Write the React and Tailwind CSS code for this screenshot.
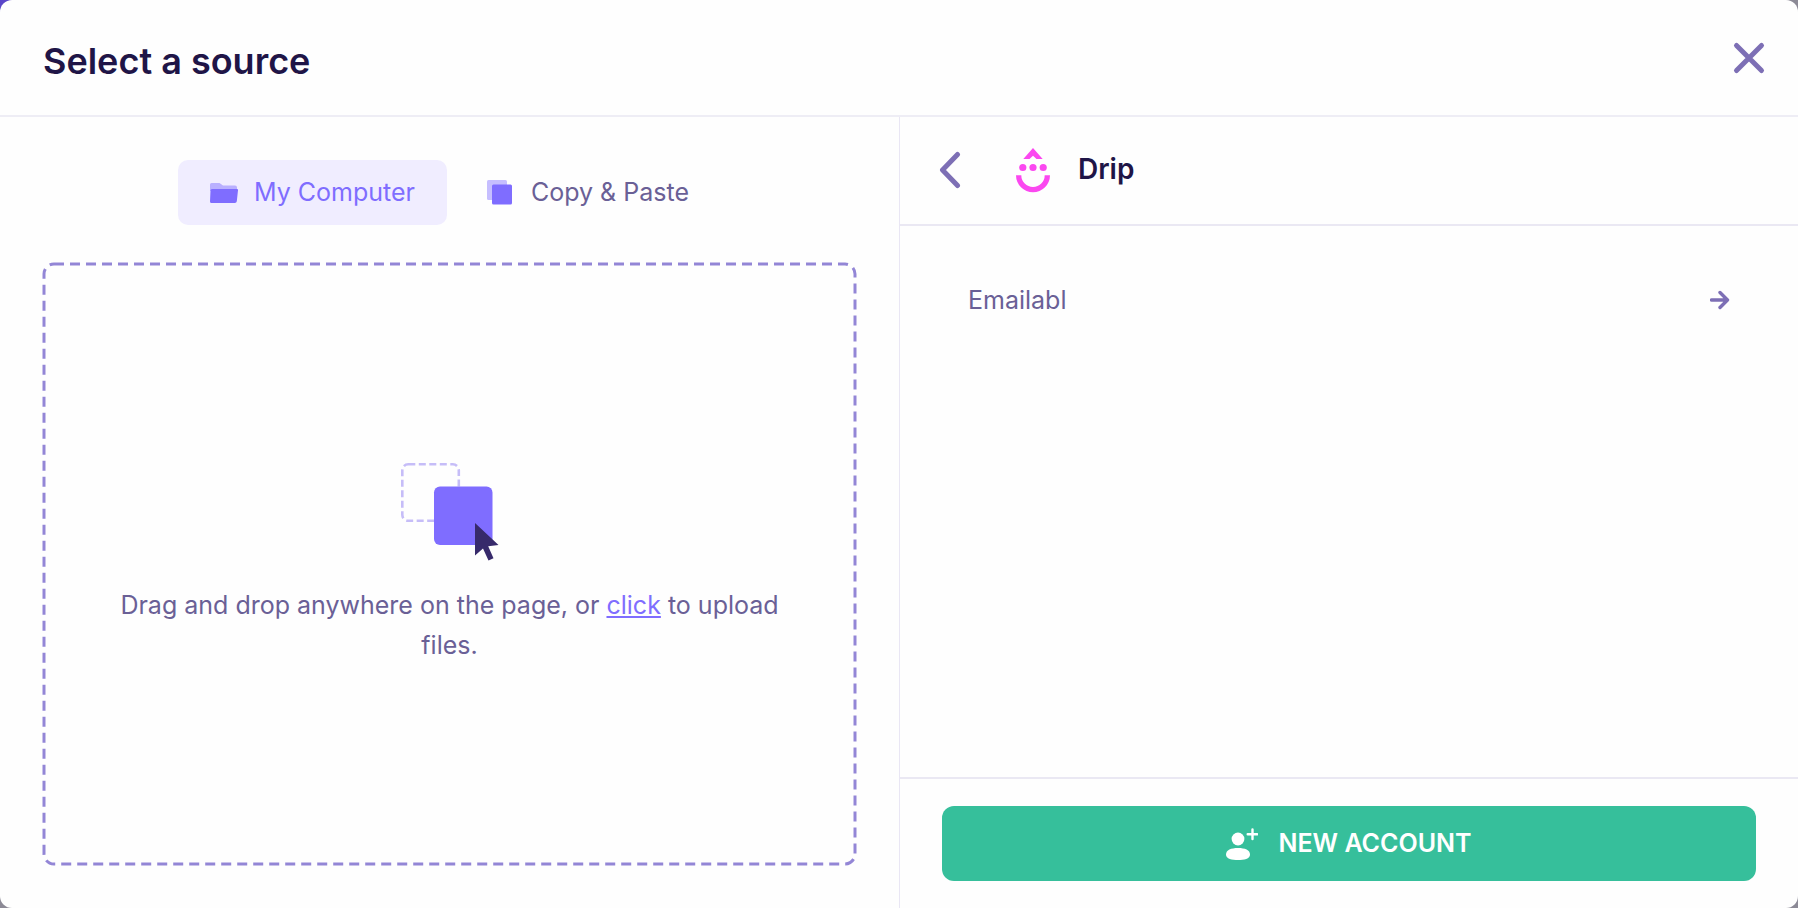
import React, { useState } from 'react';

const FolderIcon = () => (
  <svg className="w-7 h-5" viewBox="0 0 28 20" aria-hidden="true">
    <path d="M0 1.500A1.500 1.500 0 0 1 1.500 0h8l3.500 2.500h12a2 2 0 0 1 2 2V8H0z" fill="#b9b0ff" />
    <path d="M2 6H27a1 1 0 0 1 1 1.200l-1.200 11a2 2 0 0 1-2 1.800H1.500A1.500 1.500 0 0 1 0 18.500L.5 7.500A1.500 1.500 0 0 1 2 6z" fill="#7f6dff" />
  </svg>
);

const CopyIcon = () => (
  <svg className="w-7 h-[26px]" viewBox="0 0 28 26" aria-hidden="true">
    <rect width="20" height="20" rx="1.500" fill="#c6beff" />
    <rect x="5" y="4.500" width="20" height="20" rx="1.500" fill="#7f6dff" />
  </svg>
);

const DragIcon = () => (
  <svg className="w-[98px] h-[98px]" viewBox="0 0 98 98" aria-hidden="true">
    <rect x="1.300" y="1.300" width="56.500" height="56.500" rx="6" fill="none" stroke="#c6bdf8" strokeWidth="2.600" strokeDasharray="7 3.500" />
    <rect x="33" y="23.500" width="58.500" height="58.500" rx="6" fill="#7f6dff" />
    <path d="M74 60v32.500l8-7 5.500 12 5-2.200-5.300-12L97.500 82z" fill="#372a6b" />
  </svg>
);

const DripLogo = () => (
  <svg className="w-[34px] h-[45px]" viewBox="0 0 34 45" aria-hidden="true" fill="#fb48f0">
    <path d="M17 0l9.700 11h-6.200L17 7.800 13.500 11H7.300z" />
    <circle cx="6.800" cy="19.500" r="3.600" />
    <circle cx="17" cy="19.500" r="3.600" />
    <circle cx="27.200" cy="19.500" r="3.600" />
    <path d="M0 27.300h5.300a11.700 11.700 0 0 0 23.400 0H34a17 17 0 0 1-34 0z" />
  </svg>
);

const AddUserIcon = () => (
  <svg className="w-8 h-8" viewBox="0 0 32 32" aria-hidden="true" fill="#fff">
    <circle cx="12" cy="11" r="6.400" />
    <path d="M0 26.500C0 22 5 20 12 20s12 2 12 6.500S18 32 12 32 0 31 0 26.500z" />
    <path d="M26.500 1.500v9.500M21.700 6.200h9.500" stroke="#fff" strokeWidth="2.400" strokeLinecap="round" />
  </svg>
);

const tabs = [
  { id: 'computer', label: 'My Computer', icon: FolderIcon },
  { id: 'paste', label: 'Copy & Paste', icon: CopyIcon },
];

const accounts = ['Emailabl'];

const App = () => {
  const [activeTab, setActiveTab] = useState('computer');

  return (
    <div className="min-h-screen flex bg-linear-to-br from-[#5a45c9] via-[#8c8a96] via-20% to-[#8c8a96] font-['Inter',sans-serif] text-[25px] text-[#6a6096]">
      <div className="flex-1 flex flex-col bg-[#fefefe] rounded-xl overflow-hidden">
        <header className="flex items-center justify-between pl-[43px] pr-8 h-[117px] border-b-2 border-[#eeedf5]">
          <h1 className="text-[36px] leading-[44px] font-semibold text-[#1f1547] pt-1.5">Select a source</h1>
          <button type="button" aria-label="Close">
            <svg className="w-[34px] h-[34px]" viewBox="0 0 34 34" aria-hidden="true">
              <path d="M4.500 4.500l25 25M29.500 4.500l-25 25" stroke="#7d6fb5" strokeWidth="5" strokeLinecap="round" />
            </svg>
          </button>
        </header>

        <main className="flex-1 grid grid-cols-2">
          <section className="flex flex-col px-11 pt-[43px] pb-11">
            <div className="flex justify-center gap-2">
              {tabs.map(({ id, label, icon: Icon }) => (
                <button
                  key={id}
                  type="button"
                  onClick={() => setActiveTab(id)}
                  className={`flex items-center gap-4 h-[65px] px-8 rounded-[10px] ${
                    activeTab === id ? 'bg-[#f0edff] text-[#7f6dff]' : 'text-[#6a6096]'
                  }`}
                >
                  <Icon />
                  {label}
                </button>
              ))}
            </div>

            <div className="relative flex-1 mt-[39px] flex flex-col items-center justify-center px-16">
              <svg className="absolute inset-0 w-full h-full overflow-visible pointer-events-none" aria-hidden="true">
                <rect width="100%" height="100%" rx="10" fill="none" stroke="#9386d6" strokeWidth="3" strokeDasharray="10 6" />
              </svg>
              <DragIcon />
              <p className="mt-6 leading-10 text-center">
                Drag and drop anywhere on the page, or{' '}
                <a href="#upload" className="text-[#7f6dff] underline">click</a> to upload files.
              </p>
            </div>
          </section>

          <section className="flex flex-col border-l border-[#e9e6f4]">
            <div className="flex items-center h-[109px] pl-[38px] pb-px border-b-2 border-[#eae8f3]">
              <button type="button" aria-label="Back">
                <svg className="w-6 h-[38px]" viewBox="0 0 24 38" aria-hidden="true">
                  <path d="M19.500 3.500L4.500 19l15 15.500" fill="none" stroke="#7d6fb5" strokeWidth="5" strokeLinecap="round" strokeLinejoin="round" />
                </svg>
              </button>
              <span className="ml-[54px]"><DripLogo /></span>
              <h2 className="ml-7 pb-0.5 text-[28px] font-semibold text-[#1f1547]">Drip</h2>
            </div>

            <ul className="flex-1 px-[68px] pt-[54px]">
              {accounts.map((account) => (
                <li key={account}>
                  <button type="button" className="w-full flex items-center justify-between leading-10">
                    {account}
                    <svg className="w-5 h-5" viewBox="0 0 20 20" aria-hidden="true">
                      <path d="M1.500 10h16M10 2.500l7.500 7.500-7.500 7.500" fill="none" stroke="#7d6fb5" strokeWidth="3.400" strokeLinecap="round" strokeLinejoin="round" />
                    </svg>
                  </button>
                </li>
              ))}
            </ul>

            <div className="border-t-2 border-[#eae8f3] px-[42px] py-[27px]">
              <button
                type="button"
                className="w-full h-[75px] flex items-center justify-center gap-5 rounded-xl bg-[#36bf9b] text-white font-semibold"
              >
                <AddUserIcon />
                NEW ACCOUNT
              </button>
            </div>
          </section>
        </main>
      </div>
    </div>
  );
};

export default App;
